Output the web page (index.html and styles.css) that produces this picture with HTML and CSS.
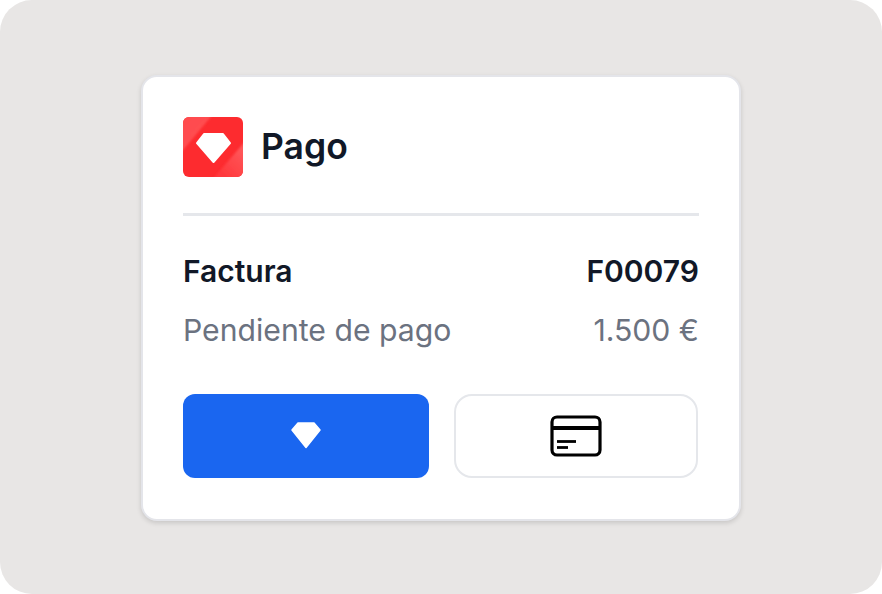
FILE: index.html
```
<!DOCTYPE html>
<html lang="es">
<head>
    <meta charset="UTF-8">
    <meta name="viewport" content="width=device-width, initial-scale=1.0">
    <title>Pago</title>
    <link rel="stylesheet" href="styles.css">
</head>
<body>
    <div class="stage">
        <div class="card">
            <div class="card-header">
                <svg class="logo" width="60" height="60" viewBox="0 0 60 60">
                    <defs>
                        <clipPath id="logoClip"><rect width="60" height="60" rx="6"/></clipPath>
                        <linearGradient id="logoTop" x1="0" y1="0" x2="0.8" y2="0.8">
                            <stop offset="0" stop-color="#ff4a4d"/>
                            <stop offset="1" stop-color="#ff4f52"/>
                        </linearGradient>
                        <linearGradient id="logoBottom" x1="1" y1="0.4" x2="0.5" y2="1">
                            <stop offset="0" stop-color="#ff5659"/>
                            <stop offset="1" stop-color="#ff383c"/>
                        </linearGradient>
                        <filter id="logoSoft"><feGaussianBlur stdDeviation="0.8"/></filter>
                    </defs>
                    <g clip-path="url(#logoClip)">
                        <rect width="60" height="60" fill="#fd2b2f"/>
                        <path d="M-4 -4H31L-4 38Z" fill="url(#logoTop)" filter="url(#logoSoft)"/>
                        <path d="M64 22V64H28Z" fill="url(#logoBottom)" filter="url(#logoSoft)"/>
                    </g>
                    <path d="M21 17H40L47 26L30.500 45L14 26Z" fill="#fff" stroke="#fff" stroke-width="2" stroke-linejoin="round"/>
                </svg>
                <h1>Pago</h1>
            </div>
            <div class="row row-main">
                <span>Factura</span>
                <span>F00079</span>
            </div>
            <div class="row row-muted">
                <span>Pendiente de pago</span>
                <span>1.500 €</span>
            </div>
            <div class="actions">
                <div class="btn btn-primary">
                    <svg width="32" height="28" viewBox="0 0 32 28">
                        <path d="M8 1H24L30 8L16 25.500L2 8Z" fill="#fff" stroke="#fff" stroke-width="1.500" stroke-linejoin="round"/>
                    </svg>
                </div>
                <div class="btn btn-outline">
                    <svg width="52" height="42" viewBox="0 0 52 42" fill="none" stroke="#000">
                        <rect x="2" y="2" width="48" height="38" rx="5" stroke-width="3.200"/>
                        <path d="M2 13H50" stroke-width="4"/>
                        <path d="M7 26.500H26" stroke-width="2.800"/>
                        <path d="M7 32.500H18" stroke-width="2.800"/>
                    </svg>
                </div>
            </div>
        </div>
    </div>
</body>
</html>
```

FILE: styles.css
```
html, body {
    margin: 0;
    padding: 0;
    background-color: #fff;
}

.stage {
    width: 882px;
    height: 594px;
    box-sizing: border-box;
    padding-top: 75px;
    background-color: #e8e6e5;
    border-radius: 32px;
    font-family: Inter, "Liberation Sans", sans-serif;
    display: flex;
    justify-content: center;
    align-items: flex-start;
}

.card {
    width: 600px;
    height: 446px;
    box-sizing: border-box;
    padding: 40px 40px 0;
    background-color: #fff;
    border: 2px solid #e4e5ea;
    border-radius: 16px;
    box-shadow: 0 2px 5px rgba(0, 0, 0, 0.14);
}

.card-header {
    display: flex;
    align-items: center;
    gap: 18px;
    padding-bottom: 36px;
    border-bottom: 3px solid #e5e7eb;
}

.card-header h1 {
    margin: 0 0 2px;
    font-size: 35.5px;
    font-weight: 600;
    color: #111827;
}

.row {
    display: flex;
    justify-content: space-between;
    line-height: 36px;
}

.row-main {
    margin-top: 37px;
    font-size: 30px;
    font-weight: 600;
    color: #111827;
}

.row-muted {
    margin-top: 23px;
    font-size: 30.2px;
    color: #6b7280;
}

.actions {
    display: grid;
    grid-template-columns: 246px 244px;
    gap: 25px;
    margin-top: 46px;
}

.btn {
    height: 84px;
    box-sizing: border-box;
    border-radius: 12px;
    display: flex;
    justify-content: center;
    align-items: center;
}

.btn-primary {
    background-color: #1a66f0;
}

.btn-outline {
    background-color: #fff;
    border: 2px solid #e5e7eb;
    border-radius: 18px;
}
```
